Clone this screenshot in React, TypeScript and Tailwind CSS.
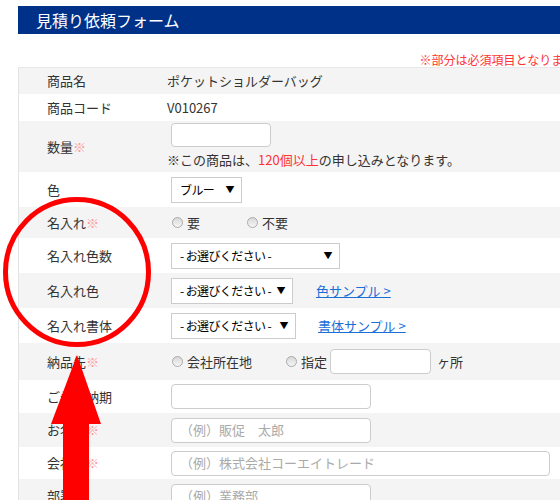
import React from 'react';

const font = { fontFamily: '"Noto Sans CJK JP", "Noto Sans", sans-serif' };

function Req() {
  return <span className="text-[#ff9a9a]">※</span>;
}

function Row({
  label,
  required,
  gray,
  h,
  children,
}: {
  label: string;
  required?: boolean;
  gray?: boolean;
  h: string;
  children?: React.ReactNode;
}) {
  return (
    <div className={`flex items-center border-l border-[#e3e3e3] ${h} ${gray ? 'bg-[#f4f4f4]' : 'bg-white'}`}>
      <div className="w-[148px] shrink-0 pl-[28px] text-[13px] text-[#333]">
        {label}
        {required && <Req />}
      </div>
      <div className="flex flex-1 items-center whitespace-nowrap text-[13px] text-[#333]">{children}</div>
    </div>
  );
}

function FakeSelect({ w, text }: { w: string; text: string }) {
  return (
    <div className={`ml-[4px] flex h-[26px] shrink-0 items-center justify-between whitespace-nowrap border border-[#cccccc] bg-white pl-[8px] pr-[7px] text-[12px] tracking-[-0.6px] text-black ${w}`}>
      <span>{text}</span>
      <span className="text-[9px]">▼</span>
    </div>
  );
}

function Radio({ label, className = '' }: { label: string; className?: string }) {
  return (
    <div className={`flex items-center ${className}`}>
      <span className="h-[11px] w-[11px] rounded-full border border-[#aaaaaa] bg-gradient-to-b from-[#d8d8d8] to-[#f6f6f6]" />
      <span className="ml-[4px]">{label}</span>
    </div>
  );
}

function TextBox({ w, placeholder }: { w: string; placeholder?: string }) {
  return (
    <div className={`ml-[4px] flex h-[25px] shrink-0 items-center rounded-[4px] border border-[#cccccc] bg-white pl-[8px] text-[13px] text-[#aaaaaa] ${w}`}>
      {placeholder}
    </div>
  );
}

export default function App() {
  return (
    <div className="relative h-[500px] w-[560px] overflow-hidden bg-white" style={font}>
      <div className="w-[586px] pl-[18px] pt-[6px]">
        {/* title bar */}
        <div className="flex h-[28px] items-center bg-[#003189] pl-[18px] text-[16px] text-white">
          見積り依頼フォーム
        </div>
        <div className="mt-[19px] h-[14px] text-right text-[12px] leading-[14px] text-[#ff3333]">
          ※部分は必須項目となります。
        </div>
        <div className="border-t border-[#e8e8e8]">
          <Row label="商品名" gray h="h-[26px]">
            ポケットショルダーバッグ
          </Row>
          <Row label="商品コード" h="h-[27px]">
            V010267
          </Row>
          <Row label="数量" required gray h="h-[51px]">
            <div className="flex flex-col">
              <div className="ml-[4px] h-[24px] w-[100px] rounded-[4px] border border-[#cccccc] bg-white" />
              <div className="mt-[3px]">
                ※この商品は、<span className="text-[#ff3333]">120個以上</span>の申し込みとなります。
              </div>
            </div>
          </Row>
          <Row label="色" h="h-[35px]">
            <FakeSelect w="w-[71px]" text="ブルー" />
          </Row>
          <Row label="名入れ" required gray h="h-[31px]">
            <Radio label="要" className="ml-[5px]" />
            <Radio label="不要" className="ml-[47px]" />
          </Row>
          <Row label="名入れ色数" h="h-[35px]">
            <FakeSelect w="w-[169px]" text="- お選びください -" />
          </Row>
          <Row label="名入れ色" gray h="h-[35px]">
            <FakeSelect w="w-[122px]" text="- お選びください -" />
            <a className="ml-[23px] text-[#1a6ed8] underline">色サンプル &gt;</a>
          </Row>
          <Row label="名入れ書体" h="h-[35px]">
            <FakeSelect w="w-[125px]" text="- お選びください -" />
            <a className="ml-[22px] text-[#1a6ed8] underline">書体サンプル &gt;</a>
          </Row>
          <Row label="納品先" required gray h="h-[37px]">
            <Radio label="会社所在地" className="ml-[5px]" />
            <Radio label="指定" className="ml-[34px]" />
            <div className="ml-[3px] h-[25px] w-[101px] shrink-0 rounded-[4px] border border-[#cccccc] bg-white" />
            <span className="ml-[6px]">ヶ所</span>
          </Row>
          <Row label="ご希望納期" h="h-[33px]">
            <TextBox w="w-[200px]" />
          </Row>
          <Row label="お名前" required gray h="h-[34px]">
            <TextBox w="w-[200px]" placeholder="（例）販促　太郎" />
          </Row>
          <Row label="会社名" required h="h-[32px]">
            <TextBox w="w-[379px]" placeholder="（例）株式会社コーエイトレード" />
          </Row>
          <Row label="部署名" gray h="h-[34px]">
            <TextBox w="w-[200px]" placeholder="（例）業務部" />
          </Row>
        </div>
      </div>

      {/* annotation: red circle and arrow */}
      <svg className="pointer-events-none absolute left-0 top-0" width="560" height="500" viewBox="0 0 560 500">
        <ellipse cx="77" cy="272" rx="71.5" ry="72.5" fill="none" stroke="#ff0000" strokeWidth="5" />
        <polygon points="77,355 101,424 89,424 89,500 63,500 63,424 51,424" fill="#ff0000" />
      </svg>
    </div>
  );
}
